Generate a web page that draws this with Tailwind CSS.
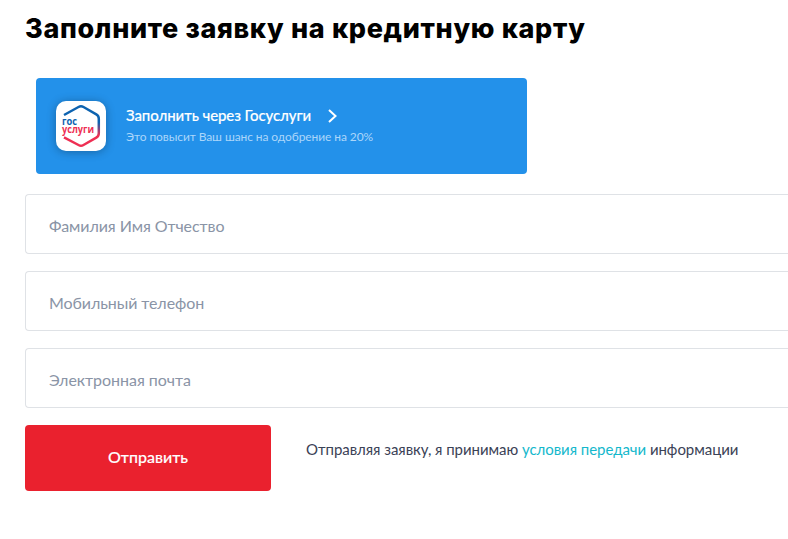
<!DOCTYPE html>
<html lang="ru">
<head>
    <meta charset="UTF-8">
    <title>Заявка на кредитную карту</title>
    <script src="https://cdn.jsdelivr.net/npm/@tailwindcss/browser@4"></script>
</head>
<body class="bg-white h-screen overflow-hidden font-['Lato','Open_Sans',sans-serif]">

    <div class="pl-[25px] pt-[11px]">
        <h1 class="h-[35px] font-['Inter','Lato',sans-serif] text-[27px] leading-[36px] font-extrabold tracking-[0.67px] text-black whitespace-nowrap">Заполните заявку на кредитную карту</h1>

        <!-- Госуслуги -->
        <a href="#" class="mt-8 ml-[11px] w-[491px] h-24 flex items-center pl-5 rounded bg-[#2391ea]">
            <span class="size-[50px] rounded-[10px] bg-white shadow-[0_1px_10px_rgba(0,0,0,0.3)]">
                <svg class="size-[50px]" viewBox="0 0 50 50" fill="none">
                    <defs>
                        <linearGradient id="hex" x1="0" y1="5" x2="0" y2="46" gradientUnits="userSpaceOnUse">
                            <stop offset="0.4" stop-color="#0d63b0"/>
                            <stop offset="0.72" stop-color="#ee2f53"/>
                        </linearGradient>
                    </defs>
                    <path d="M8 14L22.500 6Q25 4.600 27.500 6L40.300 13.400Q42.800 14.800 42.800 17.700V32.300Q42.800 35.200 40.300 36.600L27.500 44Q25 45.400 22.500 44L8 36.300" stroke="url(#hex)" stroke-width="2.500"/>
                    <text x="6" y="23.500" textLength="15" lengthAdjust="spacingAndGlyphs" class="font-['Open_Sans',sans-serif] text-[10px] font-bold" fill="#0d63b0">гос</text>
                    <text x="6" y="32" textLength="32" lengthAdjust="spacingAndGlyphs" class="font-['Open_Sans',sans-serif] text-[10px] font-bold" fill="#ee2f53">услуги</text>
                </svg>
            </span>
            <span class="ml-5 -mt-px flex flex-col">
                <span class="flex items-center text-[15px] leading-[21px] font-medium tracking-[-0.09px] text-white [-webkit-text-stroke:0.15px]">
                    Заполнить через Госуслуги
                    <svg class="mt-px ml-[17px] w-[9px] h-[14px]" viewBox="0 0 9 14" fill="none" stroke="currentColor" stroke-width="2">
                        <path d="M1 1l6.500 6L1 13"/>
                    </svg>
                </span>
                <span class="text-[12px] leading-[21px] tracking-[-0.09px] text-[#abd6fa]">Это повысит Ваш шанс на одобрение на 20%</span>
            </span>
        </a>

        <form class="mt-5">
            <div class="flex flex-col gap-[17px]">
                <input type="text" placeholder="Фамилия Имя Отчество" class="h-[60px] rounded-l border border-r-0 border-[#dfe2e6] px-[23px] pt-[3px] text-[16px] tracking-[-0.08px] placeholder:text-[#8a94a6]">
                <input type="tel" placeholder="Мобильный телефон" class="h-[60px] rounded-l border border-r-0 border-[#dfe2e6] px-[23px] pt-[3px] text-[16px] tracking-[-0.08px] placeholder:text-[#8a94a6]">
                <input type="email" placeholder="Электронная почта" class="h-[60px] rounded-l border border-r-0 border-[#dfe2e6] px-[23px] pt-[3px] text-[16px] tracking-[-0.04px] placeholder:text-[#8a94a6]">
            </div>
            <div class="mt-[17px] flex">
                <button type="submit" class="w-[246px] h-[66px] pb-[2px] rounded bg-[#ea212e] text-[16px] font-medium text-white [-webkit-text-stroke:0.15px]">Отправить</button>
                <p class="ml-[35px] mt-[13px] text-[15px] leading-[22px] tracking-[-0.05px] text-[#3b4256] whitespace-nowrap">Отправляя заявку, я принимаю <a href="#" class="text-[#14b8cc]">условия передачи</a> информации</p>
            </div>
        </form>
    </div>

</body>
</html>
